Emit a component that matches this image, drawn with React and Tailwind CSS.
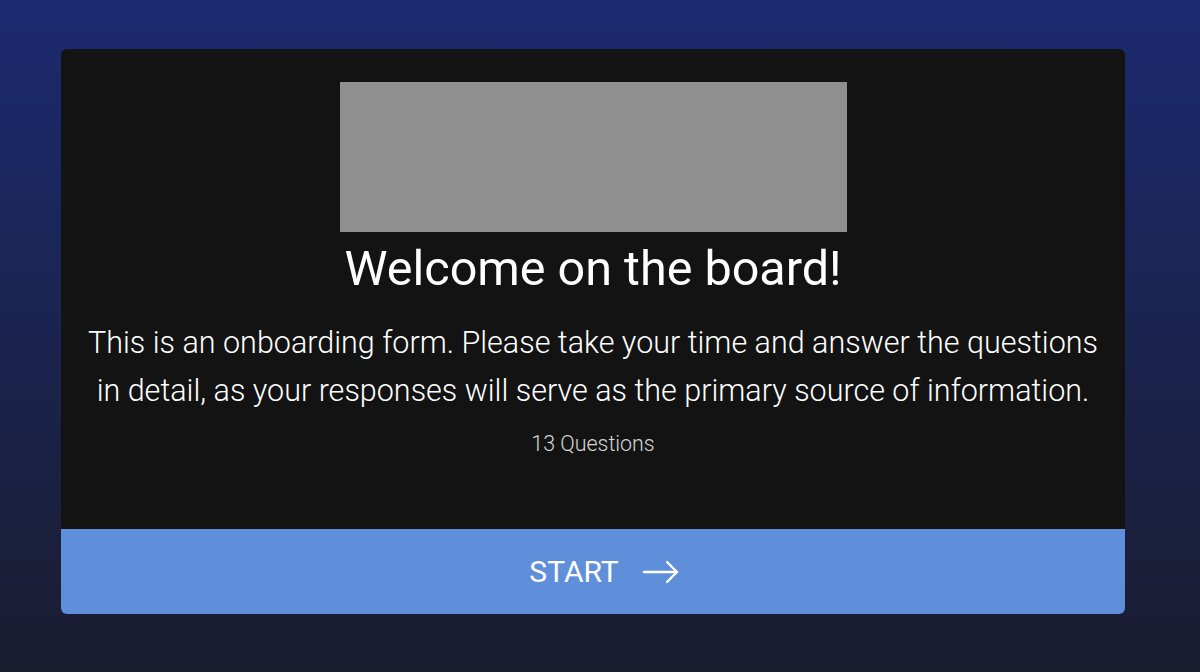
import React from 'react';

export default function App() {
  return (
    <div
      className="w-full h-[672px] bg-gradient-to-b from-[#1b2a70] to-[#1a1c30] pt-[49px] px-[61px]"
      style={{ fontFamily: 'Roboto, "Noto Sans", sans-serif' }}
    >
      <div className="w-[1064px] h-[565px] bg-[#131313] rounded-[6px] overflow-hidden flex flex-col">
        {/* Contenu */}
        <div className="flex-1 flex flex-col items-center pt-[33px]">
          <div className="w-[507px] h-[150px] bg-[#8f8f8f]" />
          <h1 className="text-[48.5px] leading-[56px] text-white font-normal mt-[9px]">
            Welcome on the board!
          </h1>
          <p className="text-[30.5px] leading-[48px] font-light text-white text-center mt-[22px] whitespace-nowrap">
            This is an onboarding form. Please take your time and answer the questions
            <br />
            in detail, as your responses will serve as the primary source of information.
          </p>
          <div className="text-[21.4px] leading-[28px] font-light text-[#d6d6d6] mt-[15px]">13 Questions</div>
        </div>

        {/* Bouton */}
        <button
          type="button"
          className="h-[85px] w-full bg-[#5f8fdb] flex items-center justify-center gap-[23px] pl-[22px] text-white text-[30px]"
        >
          <span>START</span>
          <svg width="37" height="24" viewBox="0 0 37 24" fill="none" stroke="white" strokeWidth="2.4" strokeLinecap="round" strokeLinejoin="round">
            <path d="M2 12h33" />
            <path d="M25 2l10 10-10 10" />
          </svg>
        </button>
      </div>
    </div>
  );
}
